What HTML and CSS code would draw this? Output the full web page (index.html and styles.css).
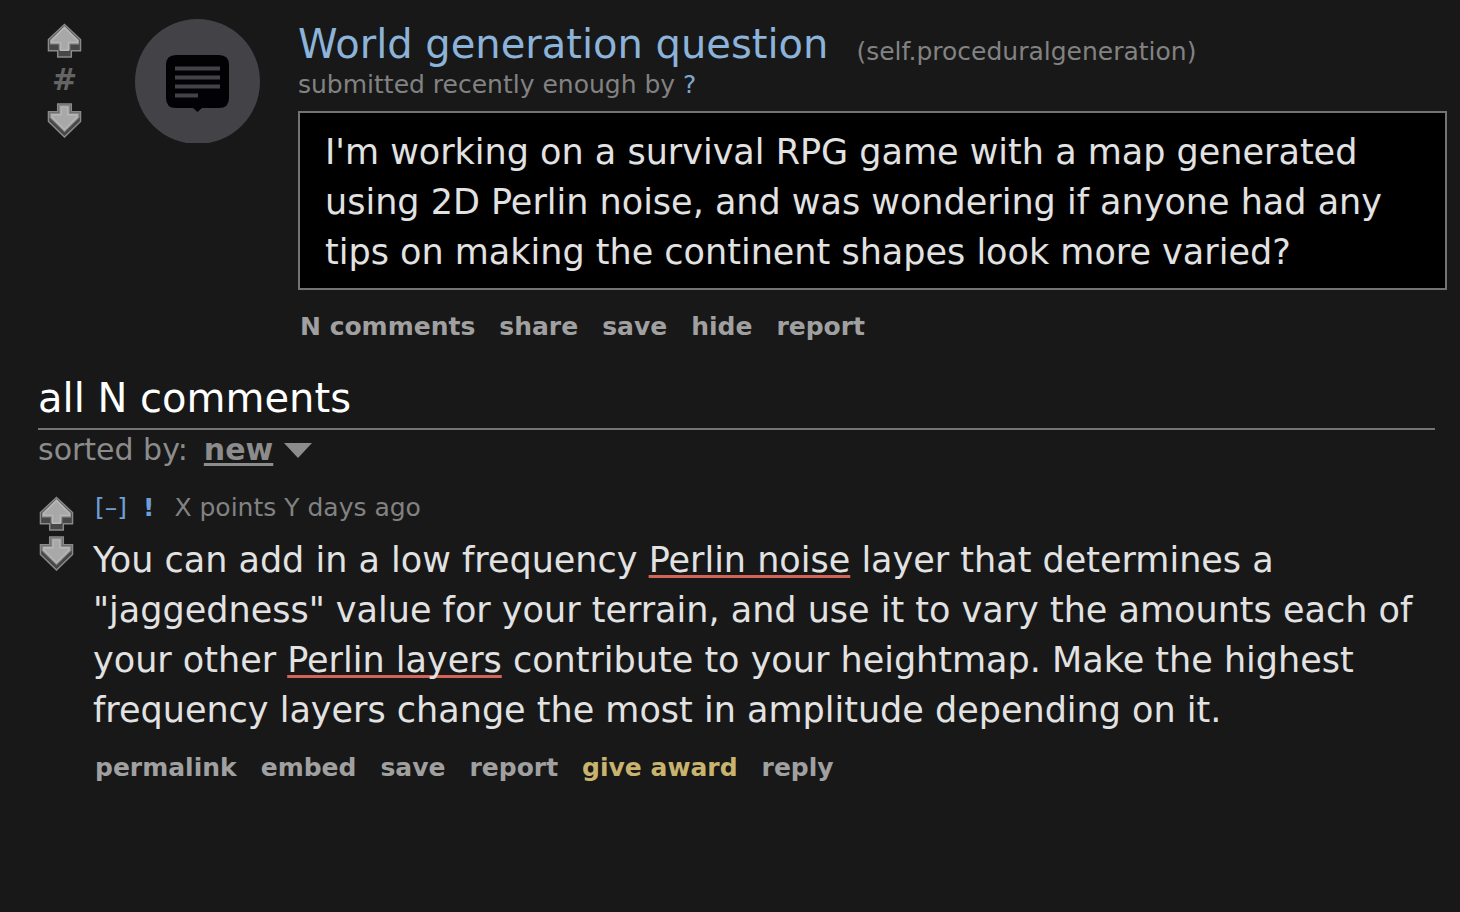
FILE: index.html
```html
<!DOCTYPE html>
<html lang="en">
<head>
<meta charset="utf-8">
<title>World generation question</title>
<link rel="stylesheet" href="styles.css">
</head>
<body>
<svg class="defs" aria-hidden="true">
  <symbol id="arrow-up" viewBox="0 0 36 36">
    <path d="M18 1.500 34.500 17V28.500H25V35H11V28.500H1.500V17Z" fill="#474747" stroke="#8a8a8a" stroke-width="1.5"/>
    <path d="M18 3 33 17.500V22H24V28H12V22H3V17.500Z" fill="#8a8a8a"/>
    <path d="M18 4.500 31.500 18V20H22V28H14V20H4.500V18Z" fill="#a8a8a8" stroke="#b8b8b8" stroke-width="1.5"/>
  </symbol>
  <symbol id="arrow-down" viewBox="0 0 36 36">
    <path d="M11 1H25V9H34.500V19L18 35 1.500 19V9H11Z" fill="#474747" stroke="#8a8a8a" stroke-width="1.5"/>
    <path d="M12 2H24V10H33.500V15L18 30 2.500 15V10H12Z" fill="#8a8a8a"/>
    <path d="M14.500 4H21.500V12H31V14.500L18 27.500 5 14.500V12H14.500Z" fill="#a8a8a8" stroke="#b8b8b8" stroke-width="1.5"/>
  </symbol>
</svg>
<article class="post">
  <div class="votes">
    <button class="vote" aria-label="Upvote post"><svg><use href="#arrow-up"/></svg></button>
    <span class="score">#</span>
    <button class="vote" aria-label="Downvote post"><svg><use href="#arrow-down"/></svg></button>
  </div>
  <svg class="thumbnail" viewBox="0 0 125 124" aria-hidden="true">
    <circle cx="62.500" cy="62.500" r="62.500" fill="#434246"/>
    <path d="M41 36H84Q94 36 94 46V79Q94 89 84 89H67L62.500 93 58 89H41Q31 89 31 79V46Q31 36 41 36Z" fill="#020205"/>
    <path d="M40 49.500H85M40 58.500H85M40 67.500H85M40 76.500H63" stroke="#434246" stroke-width="4"/>
  </svg>
  <div class="entry">
    <div class="title-row">
      <h1 class="title"><a href="#">World generation question</a></h1>
      <a class="domain" href="#">(self.proceduralgeneration)</a>
    </div>
    <p class="tagline">submitted recently enough by <a class="author" href="#">?</a></p>
    <div class="selftext">I'm working on a survival RPG game with a map generated using 2D Perlin noise, and was wondering if anyone had any tips on making the continent shapes look more varied?</div>
    <nav class="actions post-actions">
      <a href="#">N comments</a><a href="#">share</a><a href="#">save</a><a href="#">hide</a><a href="#">report</a>
    </nav>
  </div>
</article>
<section class="comments">
  <h2 class="comments-title">all N comments</h2>
  <div class="sort"><span>sorted by:</span><button class="sort-button"><span class="sort-value">new</span><svg class="caret" viewBox="0 0 30 17"><path d="M1 1H29L15 16Z" fill="#8c8c8c"/></svg></button></div>
  <article class="comment">
    <div class="votes comment-votes">
      <button class="vote" aria-label="Upvote comment"><svg><use href="#arrow-up"/></svg></button>
      <button class="vote" aria-label="Downvote comment"><svg><use href="#arrow-down"/></svg></button>
    </div>
    <div class="comment-entry">
      <p class="comment-meta"><a href="#">[–]</a><a class="commenter" href="#">!</a><span>X points Y days ago</span></p>
      <p class="comment-text">You can add in a low frequency <span class="marked">Perlin noise</span> layer that determines a "jaggedness" value for your terrain, and use it to vary the amounts each of your other <span class="marked">Perlin layers</span> contribute to your heightmap. Make the highest frequency layers change the most in amplitude depending on it.</p>
      <nav class="actions">
        <a href="#">permalink</a><a href="#">embed</a><a href="#">save</a><a href="#">report</a><a class="award" href="#">give award</a><a href="#">reply</a>
      </nav>
    </div>
  </article>
</section>
</body>
</html>
```
FILE: styles.css
```css
* { box-sizing: border-box; }
body {
  margin: 0;
  background: #181818;
  color: #e2e2e2;
  font-family: Verdana, "DejaVu Sans", sans-serif;
  font-size: 35px;
  line-height: 50px;
}
a { color: inherit; text-decoration: none; }
p, h1, h2 { margin: 0; font-weight: normal; }
button { padding: 0; border: 0; background: none; color: inherit; font: inherit; cursor: pointer; }
.defs { position: absolute; width: 0; height: 0; }

.post { display: flex; align-items: flex-start; padding: 19px 13px 0 46px; }
.votes { display: flex; flex: none; flex-direction: column; align-items: center; width: 37px; padding-top: 4px; }
.vote { display: block; height: 35px; }
.vote svg { display: block; width: 35px; height: 35px; }
.score { height: 45px; color: #646464; font-size: 30px; font-weight: bold; line-height: 44px; }
.thumbnail { flex: none; width: 125px; height: 124px; margin: 0 38px 0 52px; }
.entry { flex: 1; min-width: 0; }
.title-row { display: flex; flex-wrap: wrap; align-items: center; column-gap: 28px; }
.title { color: #8cb3d9; font-size: 40px; line-height: 50px; }
.domain { padding-top: 16px; color: #828282; font-size: 25px; line-height: 34px; }
.tagline { color: #828282; font-size: 25px; line-height: 32px; }
.author { color: #7ba6cf; }
.selftext { margin-top: 10px; padding: 14px 25px 11px; border: 2px solid #737373; background: #000; }
.actions { display: flex; flex-wrap: wrap; column-gap: 24px; padding-left: 2px; color: #a0a0a0; font-size: 25px; font-weight: bold; line-height: 32px; }
.post-actions { margin-top: 21px; }
.award { color: #c8b46e; }

.comments { padding: 30px 25px 0 38px; }
.comments-title { padding-bottom: 5px; border-bottom: 2px solid #737373; color: #fff; font-size: 40px; line-height: 50px; }
.sort { display: flex; align-items: center; gap: 16px; color: #8c8c8c; font-size: 30px; line-height: 40px; }
.sort-button { display: flex; align-items: center; gap: 10px; }
.sort-value { font-weight: bold; text-decoration: underline 3px; text-underline-offset: 3px; }
.caret { width: 30px; height: 17px; }
.comment { display: flex; align-items: flex-start; gap: 18px; padding-top: 22px; }
.comment-votes { gap: 5px; }
.comment-entry { flex: 1; min-width: 0; }
.comment-meta { display: flex; padding-left: 2px; color: #828282; font-size: 25px; line-height: 32px; margin-bottom: 11px; }
.comment-meta a { color: #6ea0d7; }
.comment-meta .commenter { margin: 0 20px 0 16px; font-weight: bold; }
.marked { text-decoration: underline 3px #d2645a; text-decoration-skip-ink: none; text-underline-offset: 3px; }
.comment .actions { margin-top: 17px; }
```
